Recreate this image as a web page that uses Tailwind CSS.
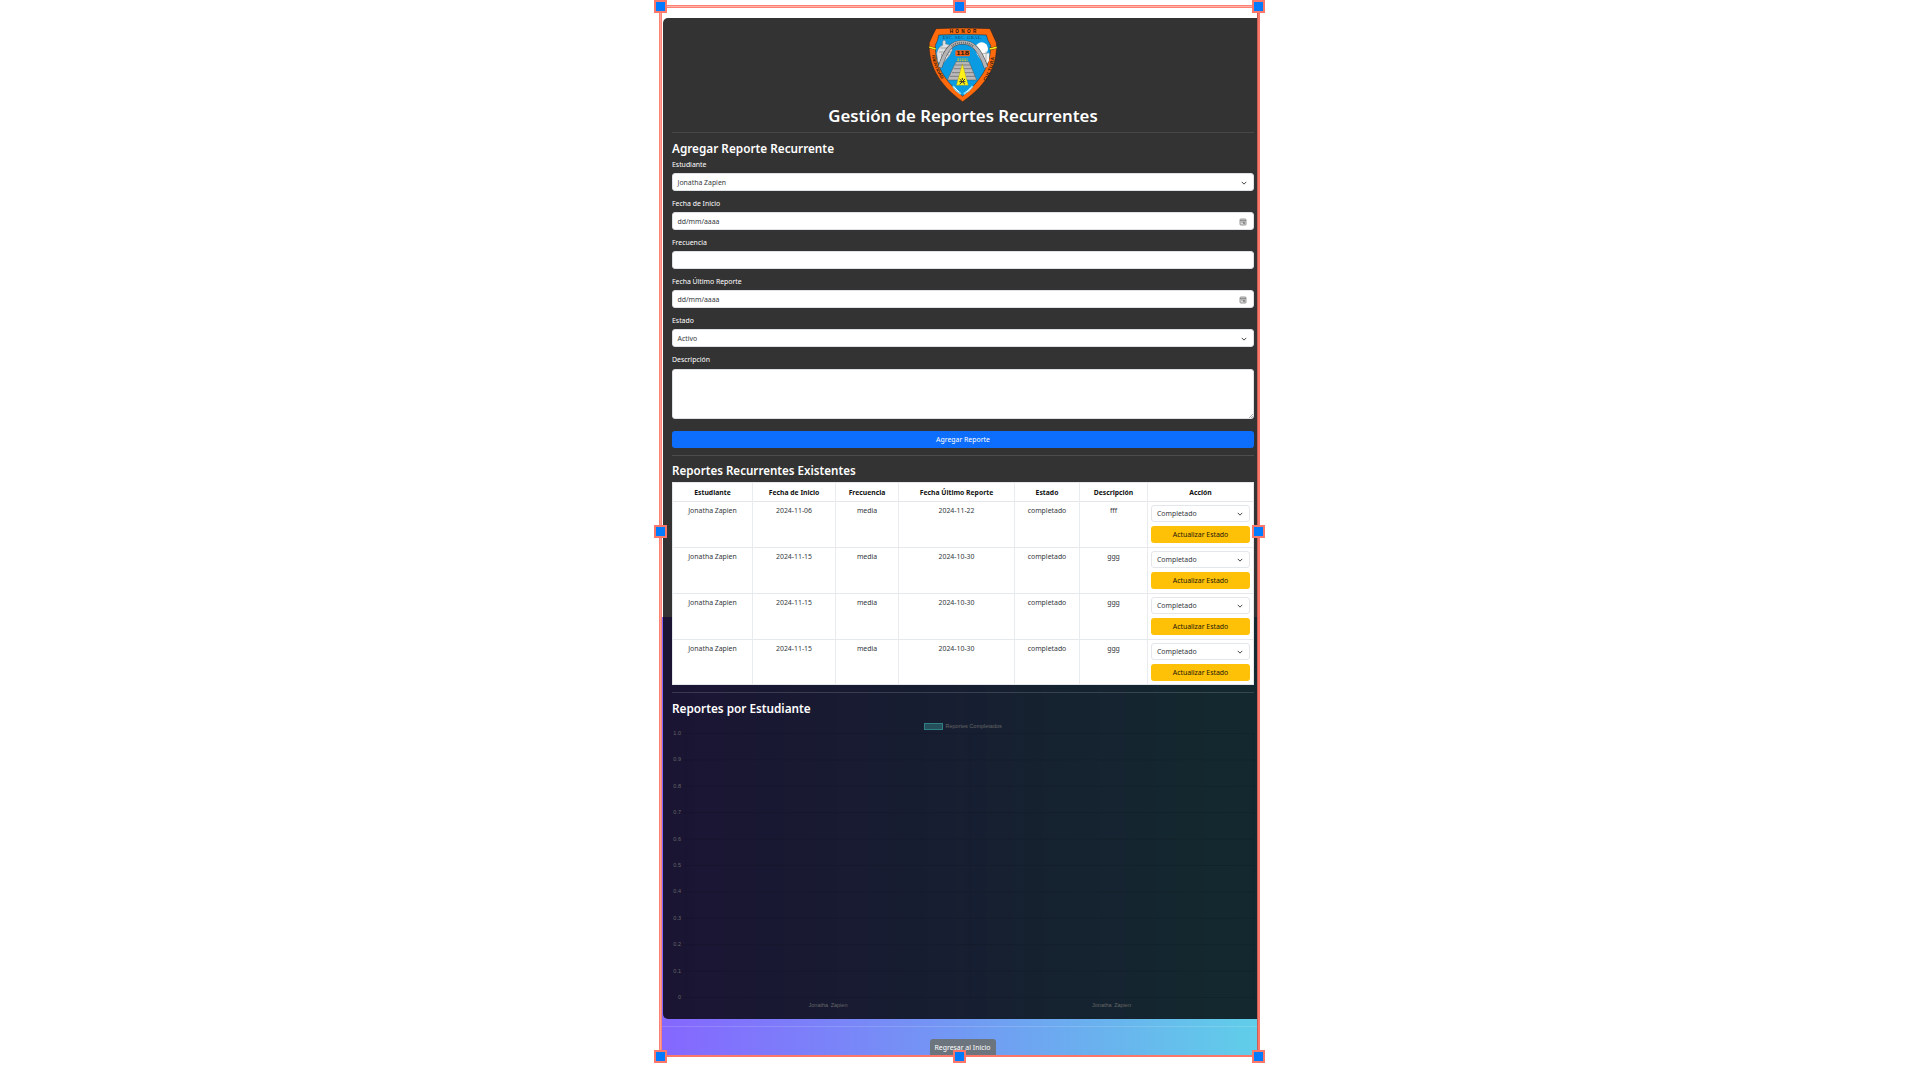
<!DOCTYPE html>
<html lang="es">
<head>
<meta charset="utf-8">
<title>Gestión de Reportes Recurrentes</title>
<script src="https://cdn.jsdelivr.net/npm/@tailwindcss/browser@4"></script>
</head>
<body class="relative h-[1080px] w-[1920px] overflow-hidden bg-white font-['Noto_Sans','Open_Sans',sans-serif] text-[6.9px] leading-[10px] text-[#33383d]">
<main class="ml-[662px] flex h-[1055px] w-[596px] flex-col overflow-hidden bg-[linear-gradient(to_right,#8567ff,#719bf3_52%,#60cee9)] bg-[length:100%_438px] bg-bottom bg-no-repeat pt-[18px]">
  <section class="ml-px flex h-[1001px] shrink-0 flex-col rounded-l-[5px] bg-black/80 pt-[2px] pr-[4px] pl-[9px] text-white">
    <svg class="ml-[243px] h-[90px] w-[100px] shrink-0" viewBox="0 0 300 270">
      <path d="M63 26Q142 22 225 26Q234 46 244 68C248 130 222 190 143 245C66 190 40 130 43 68Q52 46 63 26Z" fill="#ff6a0d" stroke="#2b211c" stroke-width="1.500"/>
      <path d="M71 45Q142 41 214 45Q218 62 227 76C227 136 200 178 143 229C86 178 60 136 61 76Q69 62 71 45Z" fill="#0a9be3" stroke="#2b211c" stroke-width="1.500"/>
      <path d="M65 100Q70 80 83 76V64Q88 58 92 64V72Q108 72 112 90L104 106L78 138L68 124Z" fill="#dfe2e5" stroke="#777" stroke-width="1.500"/>
      <path d="M72 96H108M76 84H106M80 100V128M90 98V120M99 98V108" stroke="#8a8a8a" stroke-width="2"/>
      <circle cx="200" cy="86" r="19" fill="#fff"/>
      <path d="M184 100L223 100L222 122L210 140L196 118Z" fill="#f2f2f2"/>
      <path d="M190 104L222 98M202 100V118M213 94V132" stroke="#999" stroke-width="2"/>
      <path d="M75 142C92 86 112 67 142 67C174 67 194 88 213 142" fill="none" stroke="#444" stroke-width="13"/>
      <path d="M75 142C92 86 112 67 142 67C174 67 194 88 213 142" fill="none" stroke="#b4b4b7" stroke-width="10.500"/>
      <path d="M110 79C126 64 158 64 176 80" fill="none" stroke="#666" stroke-width="6" stroke-dasharray="3 3"/>
      <path d="M123 125H162L185 180H97Z" fill="#b9b9bb" stroke="#555" stroke-width="1.500"/>
      <path d="M120 135H165M116 146H170M111 158H175M105 169H180" stroke="#555" stroke-width="1.800"/>
      <path d="M127 117H158M127 122H158" stroke="#dcc42c" stroke-width="3" stroke-dasharray="5 2"/>
      <path d="M142 131L160 196H124Z" fill="#fff018" stroke="#8a8a10" stroke-width="1"/>
      <path d="M134 177L150 193M150 177L134 193M142 174V180M133 185H151" stroke="#333" stroke-width="3"/>
      <path d="M114 198Q122 212 138 222M146 222Q162 214 173 198" fill="none" stroke="#7edcf8" stroke-width="6"/>
      <path d="M118 202L132 216M155 216L168 203" stroke="#fff" stroke-width="3"/>
      <path d="M43 81L62 87M224 87L245 82" stroke="#3a3000" stroke-width="7"/>
      <path d="M43 81L62 87M224 87L245 82" stroke="#ffe81a" stroke-width="5"/>
      <rect x="121" y="91" width="44" height="18" rx="4" fill="#f5641a"/>
      <g class="font-['Liberation_Sans',sans-serif] font-bold" fill="#2a170c">
        <text x="143" y="106" font-size="17" text-anchor="middle" textLength="38" lengthAdjust="spacingAndGlyphs">118</text>
        <text x="104" y="39.500" font-size="14" textLength="80">HONOR</text>
        <path id="idn" d="M51 106C55 134 66 158 84 184" fill="none"/>
        <text font-size="12"><textPath href="#idn" textLength="78" lengthAdjust="spacingAndGlyphs">IDENTIDAD</textPath></text>
        <path id="clt" d="M212 184C228 160 236 136 238 104" fill="none"/>
        <text font-size="14"><textPath href="#clt" textLength="78">CULTURA</textPath></text>
      </g>
      <text class="font-['Liberation_Serif',serif]" x="83" y="57" font-size="14" textLength="118" fill="#123c60">ESC. SEC. GRAL.</text>
    </svg>
    <h1 class="-mt-[5px] text-center text-[16.8px] leading-[22px] font-semibold">Gestión de Reportes Recurrentes</h1>
    <hr class="mt-[5px] border-[#474747]">
    <h2 class="mt-[7px] text-[11.75px] leading-4 font-semibold">Agregar Reporte Recurrente</h2>
    <form class="mt-[4px] flex flex-col">
      <div class="h-[39.1px]"><label class="block">Estudiante</label>
        <div class="mt-[3px] flex h-[18px] items-center justify-between rounded-[3px] border border-[#dee2e6] bg-white pt-px pr-[6px] pl-[4.500px] text-[#33383d]">Jonatha Zapien
          <svg class="size-[6px]" viewBox="0 0 16 16" fill="none" stroke="#343a40" stroke-width="2.500"><path d="m2 5 6 6 6-6"/></svg></div></div>
      <div class="h-[39.1px]"><label class="block">Fecha de Inicio</label>
        <div class="mt-[3px] flex h-[18px] items-center justify-between rounded-[3px] border border-[#dee2e6] bg-white pt-px pr-[6px] pl-[4.500px] text-[#33383d]">dd/mm/aaaa
          <svg class="size-[8px]" viewBox="0 0 16 16" fill="none" stroke="#777" stroke-width="1.500"><rect x="2" y="2" width="12" height="12" rx="1.500" fill="#ddd"/><path d="M2 5H14M4 8H12"/><path d="M9 9h2v2H9z" fill="#777"/></svg></div></div>
      <div class="h-[39.1px]"><label class="block">Frecuencia</label>
        <div class="mt-[3px] h-[18px] rounded-[3px] border border-[#dee2e6] bg-white"></div></div>
      <div class="h-[39.1px]"><label class="block"><span class="tracking-[-0.02px]">Fecha Último Reporte</span></label>
        <div class="mt-[3px] flex h-[18px] items-center justify-between rounded-[3px] border border-[#dee2e6] bg-white pt-px pr-[6px] pl-[4.500px] text-[#33383d]">dd/mm/aaaa
          <svg class="size-[8px]" viewBox="0 0 16 16" fill="none" stroke="#777" stroke-width="1.500"><rect x="2" y="2" width="12" height="12" rx="1.500" fill="#ddd"/><path d="M2 5H14M4 8H12"/><path d="M9 9h2v2H9z" fill="#777"/></svg></div></div>
      <div class="h-[39.1px]"><label class="block">Estado</label>
        <div class="mt-[3px] flex h-[18px] items-center justify-between rounded-[3px] border border-[#dee2e6] bg-white pt-px pr-[6px] pl-[4.500px] text-[#33383d]">Activo
          <svg class="size-[6px]" viewBox="0 0 16 16" fill="none" stroke="#343a40" stroke-width="2.500"><path d="m2 5 6 6 6-6"/></svg></div></div>
      <div class="h-[75.500px]"><label class="block">Descripción</label>
        <div class="mt-[3.500px] flex h-[50px] items-end justify-end rounded-[3px] border border-[#dee2e6] bg-white"><svg class="size-[4px]" viewBox="0 0 4 4" stroke="#777" stroke-width=".6"><path d="M0 4 4 0M2 4 4 2"/></svg></div></div>
      <button type="button" class="h-[17px] rounded-[3px] bg-[#0d6efd] pt-px text-white">Agregar Reporte</button>
    </form>
    <hr class="mt-[7px] border-[#4d4d4d]">
    <h2 class="mt-[7px] text-[11.6px] leading-4 font-semibold">Reportes Recurrentes Existentes</h2>
    <div class="mt-[3px] h-[203px] overflow-hidden border border-[#e3e7ea] bg-white text-center text-[#33383d]">
      <div class="grid h-[19px] grid-cols-[80px_83px_63px_116px_65px_68px_105px] divide-x divide-[#e9ecef] border-b border-[#e3e7ea] text-[6.8px] leading-[19px] font-bold text-[#111]">
        <div>Estudiante</div><div>Fecha de Inicio</div><div>Frecuencia</div><div>Fecha Último Reporte</div><div>Estado</div><div>Descripción</div><div>Acción</div>
      </div>
      <div id="rows"></div>
    </div>
    <hr class="mt-[7px] border-white/15">
    <h2 class="mt-[7px] text-[11.75px] leading-4 font-semibold">Reportes por Estudiante</h2>
    <svg id="chart" class="mt-[2px] h-[294px] w-[582px] shrink-0 font-['Liberation_Sans',sans-serif] text-[5.5px]" viewBox="0 0 582 294" fill="#666"></svg>
  </section>
  <hr class="mt-[7px] shrink-0 border-white/15">
  <button type="button" class="mt-[12px] ml-[267.500px] h-[18px] w-[66px] shrink-0 rounded-[3px] bg-[#6c757d] text-white">Regresar al Inicio</button>
</main>

<!-- selection frame laid over the page -->
<div class="pointer-events-none absolute top-[5px] left-[659px] h-[1052px] w-[601px]">
  <div class="absolute top-0 left-0 h-[3px] w-full border-y border-[#fa8173] bg-[#ffb3aa]"></div>
  <div class="absolute top-0 left-0 h-full w-[3px] border-x border-[#fa8173] bg-[#ffa094]"></div>
  <div class="absolute top-0 right-0 h-full w-[3px] border-l border-[#c85f56] bg-[#fa7769]"></div>
  <div class="absolute bottom-0 left-0 h-[2px] w-full bg-[#fa7769]"></div>
  <div class="absolute -top-[5px] -left-[5px] size-[13px] border-2 border-[#fa7769] bg-[#027bff]"></div>
  <div class="absolute -top-[5px] left-[294px] size-[13px] border-2 border-[#fa7769] bg-[#027bff]"></div>
  <div class="absolute -top-[5px] -right-[5px] size-[13px] border-2 border-[#fa7769] bg-[#027bff]"></div>
  <div class="absolute top-[520px] -left-[5px] size-[13px] border-2 border-[#fa7769] bg-[#027bff]"></div>
  <div class="absolute top-[520px] -right-[5px] size-[13px] border-2 border-[#fa7769] bg-[#027bff]"></div>
  <div class="absolute -bottom-[6px] -left-[5px] size-[13px] border-2 border-[#fa7769] bg-[#027bff]"></div>
  <div class="absolute -bottom-[6px] left-[294px] size-[13px] border-2 border-[#fa7769] bg-[#027bff]"></div>
  <div class="absolute -right-[5px] -bottom-[6px] size-[13px] border-2 border-[#fa7769] bg-[#027bff]"></div>
</div>

<script>
const data = [
  ['Jonatha Zapien', '2024-11-06', 'media', '2024-11-22', 'completado', 'fff'],
  ['Jonatha Zapien', '2024-11-15', 'media', '2024-10-30', 'completado', 'ggg'],
  ['Jonatha Zapien', '2024-11-15', 'media', '2024-10-30', 'completado', 'ggg'],
  ['Jonatha Zapien', '2024-11-15', 'media', '2024-10-30', 'completado', 'ggg'],
];
document.getElementById('rows').innerHTML = data.map(r => `
  <div class="grid h-[45.9px] grid-cols-[80px_83px_63px_116px_65px_68px_105px] divide-x divide-[#e9ecef] border-b border-[#e6e9ec] last:border-b-0">
    ${r.map(c => `<div class="pt-[4px]">${c}</div>`).join('')}
    <div class="flex flex-col gap-[4px] px-[3px] pt-[3.500px]">
      <div class="flex h-[17px] items-center justify-between rounded-[3px] border border-[#e3e6ea] pr-[6px] pl-[5px]">Completado
        <svg class="size-[6px]" viewBox="0 0 16 16" fill="none" stroke="#343a40" stroke-width="2.500"><path d="m2 5 6 6 6-6"/></svg></div>
      <button type="button" class="h-[17px] rounded-[3px] bg-[#ffc107] text-[#1a1608]">Actualizar Estado</button>
    </div>
  </div>`).join('');

let s = '<rect x="252.500" y="5.500" width="18" height="6" fill="#254f5b" stroke="#2f8085"/><text x="273.500" y="10">Reportes Completados</text>';
for (let i = 0; i <= 10; i++) {
  const y = 15 + i * 26.4;
  const label = i === 10 ? '0' : ((10 - i) / 10).toFixed(1);
  s += `<text x="9" y="${y + 2}" text-anchor="end">${label}</text><path d="M10 ${y + .5}H582" stroke="#000" stroke-opacity=".1"/>`;
}
for (const x of [14, 298, 581.5]) s += `<path d="M${x} 15V283" stroke="#000" stroke-opacity=".08"/>`;
for (const x of [156, 439.5]) s += `<text x="${x}" y="289.300" text-anchor="middle" word-spacing="1">Jonatha Zapien</text>`;
document.getElementById('chart').innerHTML = s;
</script>
</body>
</html>
